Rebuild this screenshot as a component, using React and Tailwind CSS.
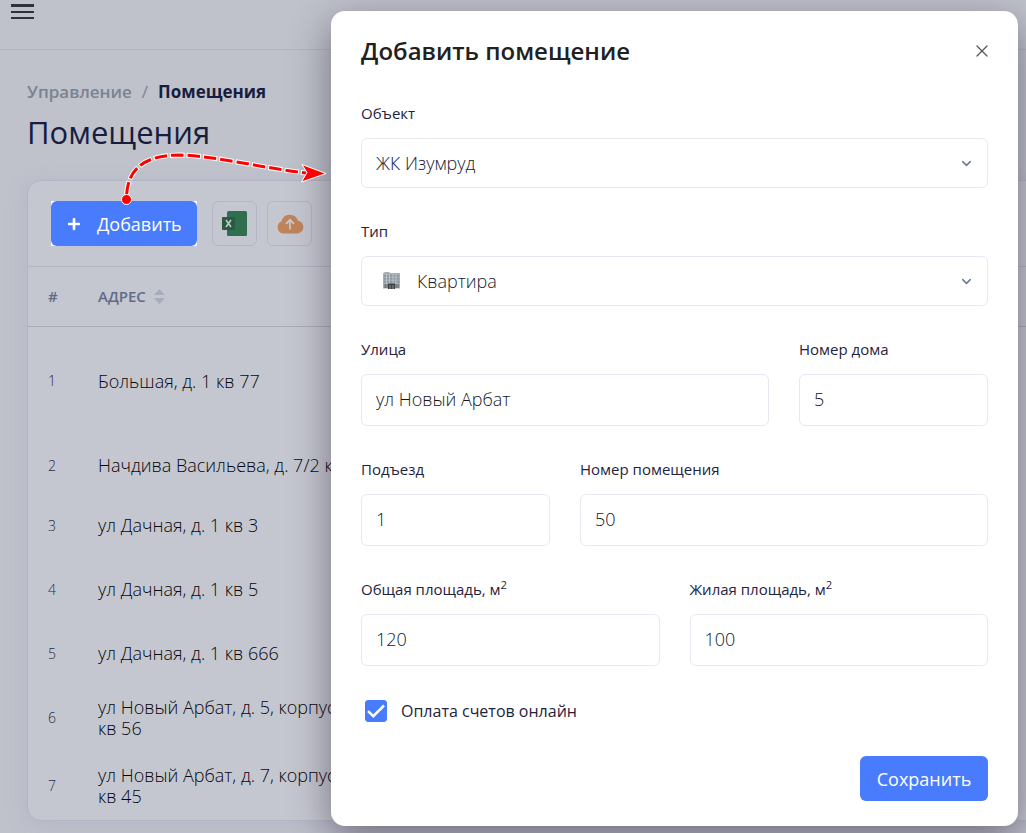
import { useState } from 'react';
import { ChevronDown, X } from 'lucide-react';
import { FaPlus } from 'react-icons/fa';

const rooms = [
  { id: 1, address: 'Большая, д. 1 кв 77', height: 'h-[109px]' },
  { id: 2, address: 'Начдива Васильева, д. 7/2 кв 5', height: 'h-[60px]' },
  { id: 3, address: 'ул Дачная, д. 1 кв 3', height: 'h-[60px]' },
  { id: 4, address: 'ул Дачная, д. 1 кв 5', height: 'h-[68px]' },
  { id: 5, address: 'ул Дачная, д. 1 кв 666', height: 'h-[60px]' },
  { id: 6, address: 'ул Новый Арбат, д. 5, корпус 1 кв\u00a056', height: 'h-[68px]' },
  { id: 7, address: 'ул Новый Арбат, д. 7, корпус 1 кв\u00a045', height: 'h-[68px]' },
];

function ExcelIcon() {
  return (
    <svg width="27" height="27" viewBox="0 0 27 27" aria-hidden="true">
      <rect x="6" y="1" width="20" height="25" rx="1.5" fill="#2f6f4d" />
      <rect x="1" y="7" width="13" height="13" rx="1" fill="#275c41" />
      <path d="M5 10l5 7M10 10l-5 7" stroke="#c5c7d0" strokeWidth="1.6" fill="none" />
    </svg>
  );
}

function CloudIcon() {
  return (
    <svg width="28" height="20" viewBox="0 0 28 20" aria-hidden="true">
      <path d="M7 19.5a6.5 6.5 0 0 1-1.600-12.300A8.600 8.600 0 0 1 22 6.800 6.400 6.400 0 0 1 21.500 19.500z" fill="#c0845c" />
      <path d="M14 15.500V6M10 9.800L14 5.800l4 4" stroke="#c9cad1" strokeWidth="1.700" fill="none" />
    </svg>
  );
}

function BuildingIcon() {
  return (
    <svg width="17" height="17" viewBox="0 0 17 17" aria-hidden="true">
      <path d="M0 1.500L2 0h4l1 1h10v15.500H0z" fill="#a9adb0" />
      <path d="M1 3h15v1.500H1zM1 6h15v1.500H1zM1 9h15v1.500H1z" fill="#7f97a6" />
      <path d="M3.500 2v10M6.500 2v10M10 2v10M13 2v10" stroke="#bfc3c6" strokeWidth="1" />
      <path d="M1 12h15v4H1z" fill="#7e8488" />
      <path d="M5 11.500h7V17H5z" fill="#3d4246" />
      <path d="M7 13v4M10 13v4" stroke="#8b9195" strokeWidth="1" />
    </svg>
  );
}

function Field({ id, label, className, children }) {
  return (
    <div className={className}>
      <label htmlFor={id} className="block mb-[14px] text-[15px] leading-[22px] font-normal text-[#1f2340]">
        {label}
      </label>
      {children}
    </div>
  );
}

function TextInput({ id, value, onChange }) {
  return (
    <input
      id={id}
      value={value}
      onChange={onChange}
      className="block w-full h-[52px] px-[14px] pb-[2px] border border-[#e8e8f3] rounded-md bg-white text-lg font-[350] text-[#14181c]"
    />
  );
}

function SelectBox({ id, icon, options }) {
  return (
    <div className="relative">
      <select
        id={id}
        className={`block w-full h-[50px] pr-10 border border-[#e8e8f3] rounded-md bg-white appearance-none text-lg font-[350] text-[#14182e] ${icon ? 'pl-[55px]' : 'pl-[14px]'}`}
      >
        {options.map((option) => (
          <option key={option}>{option}</option>
        ))}
      </select>
      {icon && <span className="absolute left-[22px] top-4 pointer-events-none">{icon}</span>}
      <ChevronDown className="absolute right-[14px] top-[18px] pointer-events-none text-[#6b7a99]" size={15} strokeWidth={2.5} />
    </div>
  );
}

function RoomsPage() {
  return (
    <div className="overflow-hidden">
      <header className="h-[50px] border-b border-[#b2b4c3] pl-[11px] pt-1">
        <button type="button" aria-label="Меню" className="flex flex-col gap-1 w-[23px]">
          <span className="h-[3px] w-full bg-[#2e323c]" />
          <span className="h-[2px] w-full bg-[#2e323c]" />
          <span className="h-[2px] w-full bg-[#2e323c]" />
        </button>
      </header>

      <main className="pl-[27px] pt-[30px] pb-3">
        <nav className="flex gap-[10px] text-[17px] leading-6 font-semibold">
          <a href="#manage" className="text-[#7b8291]">Управление</a>
          <span className="font-normal text-[#7b8291]">/</span>
          <span className="font-bold text-[#161d3f]">Помещения</span>
        </nav>
        <h1 className="mt-2 text-[31px] leading-10 font-medium text-[#161d3f]">Помещения</h1>

        <section className="mt-7 -mr-8 border border-[#b3b5c5] rounded-[14px] bg-[#c5c7d0] shadow-[0_4px_20px_rgba(150,150,185,0.25)]">
          <div className="flex items-center px-[23px] h-[85px]">
            <div className="bg-white">
              <button type="button" className="flex items-center gap-4 w-[146px] h-[45px] pl-4 rounded-md bg-[#487cfd] text-lg leading-6 font-normal text-white">
                <FaPlus size={14} />
                Добавить
              </button>
            </div>
            <button type="button" aria-label="Экспорт в Excel" className="ml-[15px] flex items-center justify-center size-[45px] border border-[#b3b5c5] rounded-md">
              <ExcelIcon />
            </button>
            <button type="button" aria-label="Загрузить" className="ml-[10px] flex items-center justify-center size-[45px] border border-[#b3b5c5] rounded-md">
              <CloudIcon />
            </button>
          </div>

          <table className="w-full table-fixed border-t border-[#b3b5c5]">
            <thead>
              <tr className="h-[60px] border-b border-[#a9abba] text-left text-[15px] text-[#626b86]">
                <th className="w-[70px] pl-5 font-semibold">#</th>
                <th className="w-[280px] font-semibold">
                  <span className="flex items-center gap-2">
                    АДРЕС
                    <svg width="11" height="15" viewBox="0 0 11 15" fill="#a6abbe" aria-hidden="true">
                      <path d="M5.500 0L11 6H0zM0 9h11l-5.500 6z" />
                    </svg>
                  </span>
                </th>
                <th />
              </tr>
            </thead>
            <tbody>
              {rooms.map((room) => (
                <tr key={room.id} className={room.height}>
                  <td className="pl-5 text-sm font-[350] text-[#262c50]">{room.id}</td>
                  <td className="text-lg leading-[21px] font-[350] text-[#06070d]">{room.address}</td>
                  <td />
                </tr>
              ))}
            </tbody>
          </table>
        </section>
      </main>
    </div>
  );
}

function AddRoomDialog() {
  const [form, setForm] = useState({
    street: 'ул Новый Арбат',
    house: '5',
    entrance: '1',
    room: '50',
    total: '120',
    living: '100',
  });
  const [online, setOnline] = useState(true);

  const update = (key) => (e) => setForm({ ...form, [key]: e.target.value });

  return (
    <div role="dialog" aria-labelledby="dialogTitle" className="w-full px-[30px] pt-5 pb-[25px] rounded-[14px] bg-white shadow-[0_12px_40px_rgba(20,10,30,0.45)]">
      <div className="flex items-center justify-between h-10">
        <h2 id="dialogTitle" className="text-2xl font-semibold text-[#212121]">Добавить помещение</h2>
        <button type="button" aria-label="Закрыть" className="-mr-1 text-[#555555]">
          <X size={20} strokeWidth={1.5} />
        </button>
      </div>

      <form className="mt-[31px]" onSubmit={(e) => e.preventDefault()}>
        <div className="grid grid-cols-12 gap-x-[30px] gap-y-8">
          <Field id="object" label="Объект" className="col-span-12">
            <SelectBox id="object" options={['ЖК Изумруд']} />
          </Field>
          <Field id="type" label="Тип" className="col-span-12">
            <SelectBox id="type" options={['Квартира']} icon={<BuildingIcon />} />
          </Field>
          <Field id="street" label="Улица" className="col-span-8">
            <TextInput id="street" value={form.street} onChange={update('street')} />
          </Field>
          <Field id="house" label="Номер дома" className="col-span-4">
            <TextInput id="house" value={form.house} onChange={update('house')} />
          </Field>
          <Field id="entrance" label="Подъезд" className="col-span-4">
            <TextInput id="entrance" value={form.entrance} onChange={update('entrance')} />
          </Field>
          <Field id="room" label="Номер помещения" className="col-span-8">
            <TextInput id="room" value={form.room} onChange={update('room')} />
          </Field>
          <Field id="total" label={<>Общая площадь, м<sup>2</sup></>} className="col-span-6">
            <TextInput id="total" value={form.total} onChange={update('total')} />
          </Field>
          <Field id="living" label={<>Жилая площадь, м<sup>2</sup></>} className="col-span-6">
            <TextInput id="living" value={form.living} onChange={update('living')} />
          </Field>
        </div>

        <div className="mt-[33px] flex items-center gap-[14px] pl-1 h-6">
          <span className="relative size-[22px]">
            <input
              id="online"
              type="checkbox"
              checked={online}
              onChange={(e) => setOnline(e.target.checked)}
              className="block size-[22px] appearance-none rounded-[3px] border border-[#487cfd] checked:bg-[#487cfd]"
            />
            {online && (
              <svg className="absolute inset-0 pointer-events-none" width="22" height="22" viewBox="0 0 22 22" aria-hidden="true">
                <path d="M3 11.200l5.300 5L19 5.500" stroke="#fff" strokeWidth="2.500" fill="none" />
              </svg>
            )}
          </span>
          <label htmlFor="online" className="text-base font-normal text-[#1f2340]">Оплата счетов онлайн</label>
        </div>

        <div className="mt-[33px] flex justify-end">
          <button type="submit" className="w-32 h-[45px] rounded-md bg-[#487cfd] text-lg font-normal text-white">
            Сохранить
          </button>
        </div>
      </form>
    </div>
  );
}

// dashed pointer from the add button to the dialog
function Pointer() {
  return (
    <svg className="absolute left-[110px] top-[140px] pointer-events-none" width="225" height="75" viewBox="110 140 225 75" fill="none" aria-hidden="true">
      <path d="M126.500 200C126 171 142 155 180 155C216 156 262 168 306 173" stroke="#fff" strokeWidth="5" strokeDasharray="14.500 2" strokeDashoffset="-4.500" />
      <path d="M126.500 200C126 171 142 155 180 155C216 156 262 168 306 173" stroke="#f00" strokeWidth="3" strokeDasharray="12.500 4" strokeDashoffset="-5.500" />
      <circle cx="126.500" cy="199.500" r="5" fill="#f00" stroke="#fff" />
      <path d="M326 173.500L302 164.500l5 8-5.500 9.500z" fill="#f00" stroke="#fff" />
    </svg>
  );
}

export default function App() {
  return (
    <div className="relative min-h-screen overflow-hidden bg-[#bfc2cb] font-['Open_Sans','Noto_Sans',sans-serif] font-light">
      <RoomsPage />
      <div className="absolute inset-x-0 top-0 pl-[331px] pr-2 pt-[11px]">
        <AddRoomDialog />
      </div>
      <Pointer />
    </div>
  );
}
